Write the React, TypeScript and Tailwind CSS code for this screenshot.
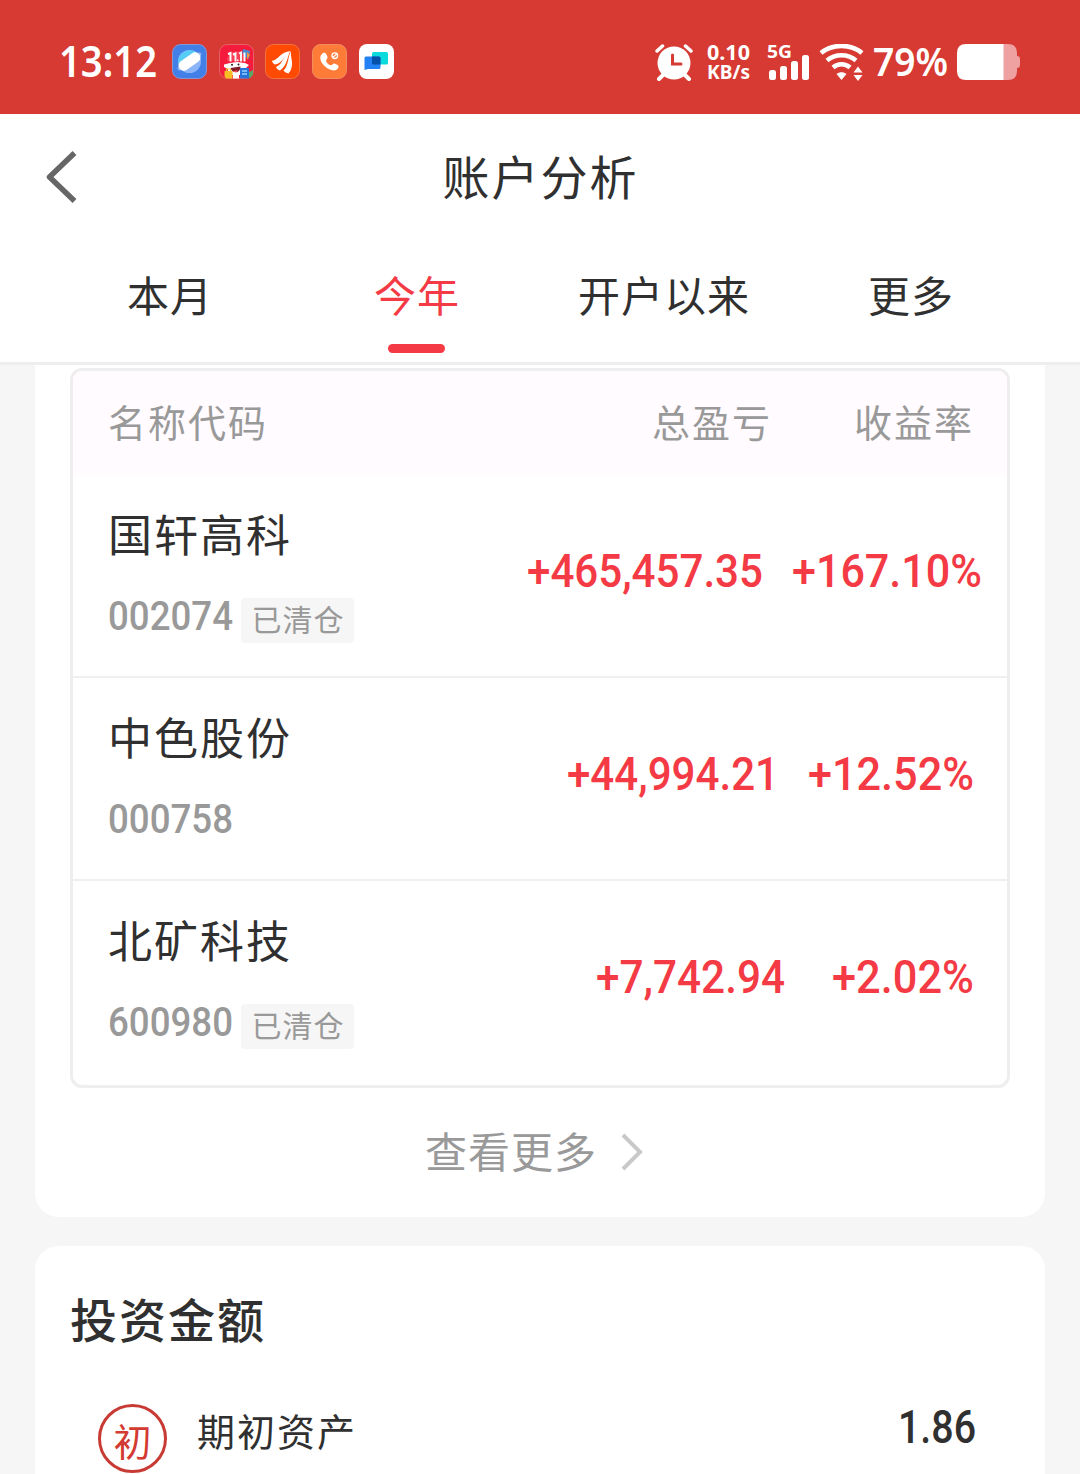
import React from 'react';
import clsx from 'clsx';

type Holding = {
  name: string;
  code: string;
  closed?: boolean;
  profit: string;
  rate: string;
  profitClass: string;
  rateClass: string;
};

const holdings: Holding[] = [
  {
    name: '国轩高科',
    code: '002074',
    closed: true,
    profit: '+465,457.35',
    rate: '+167.10%',
    profitClass: 'w-[236px]',
    rateClass: 'ml-[29px] mr-[25px] w-[190px]',
  },
  {
    name: '中色股份',
    code: '000758',
    profit: '+44,994.21',
    rate: '+12.52%',
    profitClass: 'w-[212px]',
    rateClass: 'ml-[29px] mr-[33px] w-[166px]',
  },
  {
    name: '北矿科技',
    code: '600980',
    closed: true,
    profit: '+7,742.94',
    rate: '+2.02%',
    profitClass: 'w-[189px]',
    rateClass: 'ml-[47px] mr-[33px] w-[142px]',
  },
];

const tabs = [
  { label: '本月' },
  { label: '今年', active: true },
  { label: '开户以来' },
  { label: '更多' },
];

// Condensed numerals that always fill their box exactly
function Numerals({ text, size, className }: { text: string; size: number; className?: string }) {
  return (
    <svg className={clsx('block h-[52px] overflow-visible fill-current', className)}>
      <text
        x="0"
        y="41"
        fontSize={size}
        fontWeight={500}
        fontFamily="Roboto, sans-serif"
        textLength="100%"
        lengthAdjust="spacingAndGlyphs"
      >
        {text}
      </text>
    </svg>
  );
}

function AppBadges() {
  return (
    <div className="flex items-center gap-[11.7px]">
      <svg width="35" height="35" viewBox="0 0 35 35">
        <rect x=".5" y=".5" width="34" height="34" rx="8" fill="#4280e8" stroke="#8797d2" />
        <circle cx="17.5" cy="17.5" r="11.5" fill="#8bb5f8" />
        <path d="M6.5 20A11.5 11.5 0 0 1 26 9.8Z" fill="#55cdf5" />
        <ellipse cx="17.5" cy="17.5" rx="14.2" ry="4.5" fill="#91b4f3" transform="rotate(-35 17.5 17.5)" />
        <rect x="5.5" y="12.2" width="24" height="10.6" rx="5" fill="#fff" transform="rotate(-35 17.5 17.5)" />
      </svg>
      <svg width="35" height="35" viewBox="0 0 35 35">
        <rect x=".5" y=".5" width="34" height="34" rx="8" fill="#f51b3d" stroke="#e9626a" />
        <path d="M24 5l7 2-1 8-7-4z" fill="#4a8bd0" />
        <path d="M28 8l3 3-3 5z" fill="#f59438" />
        <path d="M8 17c0-13 19-13 19 0z" fill="#f84055" />
        <path d="M9 10l2.500-1v8.500M14 10.500l2.500-1v8M20 9.500l2-1v9M25.500 8.500v9" fill="none" stroke="#fff" strokeWidth="1.900" />
        <path d="M18 15.500h1.500v1.800h-1.500z" fill="#fff" />
        <path d="M5 20.500l6-1.500 7-1 8 1 4 2-4 4v6H9v-6l-4-2z" fill="#fff" />
        <circle cx="13" cy="20.800" r="1" fill="#222" />
        <circle cx="19.500" cy="20.500" r="1" fill="#222" />
        <path d="M11.500 24l10-1.500c0 7-8 8-10 1.500z" fill="#811b25" />
        <path d="M14 27l5-.7-1 1.700h-3z" fill="#f44b54" />
        <path d="M5.500 27h8v7.500h-6q-2-1-2-3z" fill="#f8bd24" />
        <path d="M7.500 27v-2h4v2" stroke="#f6cb39" fill="none" />
        <path d="M14 29h6v5.500h-6z" fill="#fff" />
        <path d="M21 24h9v10.500h-9z" fill="#2873d9" />
        <path d="M23 27h5M23 30h5" stroke="#8ed3ff" strokeWidth="1.500" />
        <path d="M30 28l4-2v5l-3 3h-1z" fill="#59a768" />
      </svg>
      <svg width="35" height="35" viewBox="0 0 35 35">
        <rect x=".5" y=".5" width="34" height="34" rx="8" fill="#ff4a03" stroke="#f27540" />
        <path d="M7 16.800c6-.5 8.500-9 18.500-9.800-6 3.500-7 12-15.500 13.500-1.500-.5-2.700-2-3-3.700z" fill="#fff" />
        <path d="M11 23c7.500-3 7-12.500 14.500-16-3.500 5-2.500 14-10.500 19.500-1.800-.5-3.300-1.800-4-3.500z" fill="#fff" />
        <path d="M18.500 26.500c5.500-5 4-14 7.500-19.500-1.200 6 4.500 14.500-2.500 22.500-2-.3-4-1.500-5-3z" fill="#fff" />
      </svg>
      <svg width="35" height="35" viewBox="0 0 35 35">
        <rect x=".5" y=".5" width="34" height="34" rx="8" fill="#ff7c38" stroke="#f08e60" />
        <path
          d="M9.500 10.500c1.700-2.500 3.800-2 4.700-.5l1.300 3c.5 1.500-1.700 2.500-1.400 4 .6 2 2.500 3.700 4.500 4.300 1.500.3 2.300-2 4-1.700l3 1.500c2 1.200.5 4-1.500 5-3 1-7.500 0-11.500-4-4.500-4.500-5.300-9-3.100-11.600z"
          fill="#fff"
        />
        <circle cx="22.800" cy="11.700" r="2.800" fill="none" stroke="#fff" strokeWidth="1.300" />
        <path d="M20.900 13.500l3.800-3.600" stroke="#fff" strokeWidth="1.200" />
      </svg>
      <svg width="35" height="35" viewBox="0 0 35 35">
        <rect width="35" height="35" rx="8" fill="#fff" />
        <rect x="13" y="8" width="16" height="12.500" rx="1.500" fill="#0bdbdc" />
        <path d="M7 12.500h13q1.500 0 1.500 1.500v9.500q0 1.500-1.500 1.500H9l-3.500 1V14q0-1.500 1.500-1.500z" fill="#2381f5" />
        <path d="M13 12.500h7q1.500 0 1.500 1.500v6.500h-7q-1.500 0-1.500-1.500z" fill="#0550a8" />
      </svg>
    </div>
  );
}

function StatusBar() {
  return (
    <div className="flex h-[114px] items-start bg-[#d63a32] pt-11 text-white">
      <svg className="ml-[61px] h-9 w-[97px] overflow-visible fill-current">
        <text x="-2" y="32.500" fontSize="43" fontWeight="600" fontFamily="'Noto Sans', sans-serif" textLength="98" lengthAdjust="spacingAndGlyphs">
          13:12
        </text>
      </svg>
      <div className="ml-[14px]">
        <AppBadges />
      </div>

      <svg className="ml-auto" width="38" height="37" viewBox="0 0 38 37">
        <circle cx="19" cy="19" r="16.500" fill="#fff" />
        <path d="M17.500 11v9h8.500" fill="none" stroke="#d63a32" strokeWidth="3" strokeLinecap="round" />
        <path d="M2 7l5.500-5M36 7l-5.500-5" stroke="#fff" strokeWidth="3.500" strokeLinecap="round" />
        <path d="M8 31l-4 4M30 31l4 4" stroke="#fff" strokeWidth="4" strokeLinecap="round" />
      </svg>
      <svg className="ml-[15px] h-9 w-[43px] overflow-visible fill-current">
        <g fontFamily="'Noto Sans', sans-serif" fontWeight="700">
          <text x="-1" y="15.500" fontSize="21" textLength="43" lengthAdjust="spacingAndGlyphs">0.10</text>
          <text x="-1" y="35" fontSize="19" textLength="43" lengthAdjust="spacingAndGlyphs">KB/s</text>
        </g>
      </svg>
      <svg className="ml-[17px] h-9 w-[42px] overflow-visible fill-current">
        <text x="-1" y="14" fontSize="18.500" fontWeight="700" fontFamily="'Noto Sans', sans-serif" textLength="25" lengthAdjust="spacingAndGlyphs">
          5G
        </text>
        <rect x="1" y="26" width="7" height="10" rx="2.500" />
        <rect x="12" y="22" width="7" height="14" rx="2.500" />
        <rect x="23" y="17" width="7" height="19" rx="2.500" />
        <rect x="34" y="11" width="7" height="25" rx="2.500" />
      </svg>
      <svg className="ml-[9px]" width="45" height="37" viewBox="0 0 45 37">
        <g fill="none" stroke="#fff" strokeWidth="4.500">
          <path d="M2 9c11-9.500 30-9.500 41 0" />
          <path d="M8 16.500c8-7 21-7 29 0" />
          <path d="M14 23.500c5-4.300 12-4.300 17 0" />
        </g>
        <path d="M17.500 30c3-2.500 7-2.500 10 0L22.500 36z" fill="#fff" />
        <path d="M39 22.500l4.500 6h-9zM39 37l4.500-6h-9z" fill="#fff" />
      </svg>
      <svg className="ml-[11px] h-9 w-[73px] overflow-visible fill-current">
        <text x="-2" y="32" fontSize="39" fontWeight="600" fontFamily="'Noto Sans', sans-serif" textLength="75" lengthAdjust="spacingAndGlyphs">
          79%
        </text>
      </svg>
      <svg className="ml-[9px] mr-[60px]" width="63" height="36" viewBox="0 0 63 36">
        <path d="M46 0h5q9 0 9 9v3q3 0 3 3v6q0 3-3 3v3q0 9-9 9h-5z" fill="#efa0a0" />
        <path d="M9 0h37.500v36H9q-9 0-9-9V9q0-9 9-9z" fill="#fff" />
      </svg>
    </div>
  );
}

function Header() {
  return (
    <header className="h-[251px] border-b-[3px] border-[#eeeeee] bg-white">
      <div className="grid h-[124px] grid-cols-[120px_1fr_120px] items-center">
        <svg className="ml-[45px] mt-px" width="34" height="54" viewBox="0 0 34 54" fill="none">
          <path d="M29.500 3L4.500 27l25 24" stroke="#666" strokeWidth="5.500" strokeLinejoin="round" />
        </svg>
        <h1 className="pb-[3px] pl-px text-center text-[47px] leading-[56px] tracking-[2px]">账户分析</h1>
      </div>
      <nav className="grid grid-cols-4 px-[46px]">
        {tabs.map((tab) => (
          <div key={tab.label} className={clsx('flex flex-col items-center', tab.active && 'text-[#f43a44]')}>
            <span className="mt-7 pl-px text-[42px] leading-[56px] tracking-[1px]">{tab.label}</span>
            {tab.active && <span className="mt-[22px] h-[9px] w-[57px] rounded-full bg-[#f43a44]" />}
          </div>
        ))}
      </nav>
    </header>
  );
}

function HoldingRow({ item }: { item: Holding }) {
  return (
    <div className="flex h-[203px] border-b-2 border-[#f0f0f0] pl-[35px] last:border-b-0">
      <div className="grow">
        <div className="mt-[30px] text-[44px] leading-[56px] tracking-[2px]">{item.name}</div>
        <div className="mt-7 flex items-start text-[#999]">
          <Numerals text={item.code} size={41} className="w-[125px]" />
          {item.closed && (
            <span className="ml-2 mt-[9px] h-[45px] w-[113px] rounded bg-[#f6f6f6] pl-px text-center text-[30px] leading-[41px] tracking-[1px]">
              已清仓
            </span>
          )}
        </div>
      </div>
      <div className="mt-[71px] flex text-[#f43a44]">
        <Numerals text={item.profit} size={46} className={item.profitClass} />
        <Numerals text={item.rate} size={46} className={item.rateClass} />
      </div>
    </div>
  );
}

export default function App() {
  return (
    <div className="h-[1474px] w-[1080px] overflow-hidden bg-[#f6f6f6] font-['Noto_Sans_CJK_SC',sans-serif] text-[#303030]">
      <StatusBar />
      <Header />

      <main className="px-[35px]">
        <section className="h-[852px] rounded-b-[24px] bg-white px-[35px] pt-[3px]">
          <div className="h-[720px] w-[940px] overflow-hidden rounded-xl border-[3px] border-[#eeeeee]">
            <div className="flex h-[104px] items-center bg-[#fffbff] px-[35px] pb-[5px] text-[38px] leading-[56px] tracking-[2px] text-[#999]">
              <span className="grow">名称代码</span>
              <span>总盈亏</span>
              <span className="ml-[82px] -mr-0.5">收益率</span>
            </div>
            {holdings.map((item) => (
              <HoldingRow key={item.code} item={item} />
            ))}
          </div>
          <div className="mt-[34px] flex items-center justify-center pr-3 text-[#999]">
            <span className="text-[42px] leading-[56px] tracking-[1px]">查看更多</span>
            <svg className="ml-6 mt-1" width="22" height="38" viewBox="0 0 22 38" fill="none">
              <path d="M2 2l17 17L2 36" stroke="#c9c9c9" strokeWidth="4" />
            </svg>
          </div>
        </section>

        <section className="mt-[29px] h-[280px] rounded-t-[24px] bg-white px-[35px] pt-11">
          <h2 className="text-[47px] font-medium leading-[56px] tracking-[2px]">投资金额</h2>
          <div className="mt-[58px] flex items-start pl-7 pr-[34px]">
            <span className="flex h-[69px] w-[69px] justify-center rounded-full border-[3px] border-[#c83b34] text-[38px] leading-[65px] text-[#d33a32]">
              初
            </span>
            <span className="ml-[30px] grow text-[38px] leading-[52px] tracking-[2px]">期初资产</span>
            <Numerals text="1.86" size={46} className="-mt-0.5 w-[78px]" />
          </div>
        </section>
      </main>
    </div>
  );
}
